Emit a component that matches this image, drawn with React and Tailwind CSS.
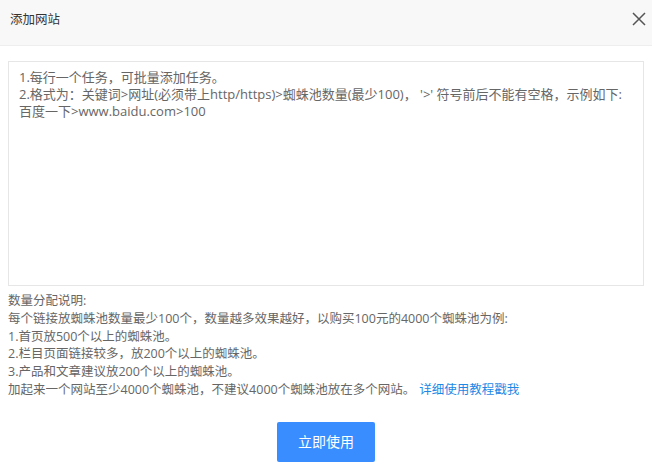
export default function App() {
  const font = { fontFamily: '"Open Sans", "Noto Sans CJK SC", sans-serif' };

  return (
    <div className="w-[652px] h-[468px] bg-white overflow-hidden" style={font}>
      <div className="flex items-start justify-between h-[46px] pl-[10px] pr-[6px] pt-[11px] bg-[#f8f8f8] border-b border-[#eeeeee]">
        <span className="text-[12.5px] leading-[17px] text-[#333]">添加网站</span>
        <svg width="14" height="14" viewBox="0 0 14 14" className="mt-[1px]">
          <path d="M1 1 L13 13 M13 1 L1 13" stroke="#555" strokeWidth="1.5" />
        </svg>
      </div>

      <div className="px-[8px] pt-[15px]">
        <div className="h-[225px] border border-[#e6e6e6] px-[10px] pt-[7px] text-[13px] leading-[17px] text-[#666]">
          <p>1.每行一个任务，可批量添加任务。</p>
          <p>2.格式为：关键词&gt;网址(必须带上http/https)&gt;蜘蛛池数量(最少100)， '&gt;' 符号前后不能有空格，示例如下:</p>
          <p>百度一下&gt;www.baidu.com&gt;100</p>
        </div>

        <div className="mt-[6px] text-[12.5px] leading-[17.8px] text-[#666]">
          <p>数量分配说明:</p>
          <p>每个链接放蜘蛛池数量最少100个，数量越多效果越好，以购买100元的4000个蜘蛛池为例:</p>
          <p>1.首页放500个以上的蜘蛛池。</p>
          <p>2.栏目页面链接较多，放200个以上的蜘蛛池。</p>
          <p>3.产品和文章建议放200个以上的蜘蛛池。</p>
          <p>
            加起来一个网站至少4000个蜘蛛池，不建议4000个蜘蛛池放在多个网站。
            <a className="ml-[4px] text-[#1e88e5]">详细使用教程戳我</a>
          </p>
        </div>

        <div className="flex justify-center mt-[23px]">
          <button className="w-[98px] h-[40px] rounded-[2px] bg-[#3a8dff] text-white text-[14px]">
            立即使用
          </button>
        </div>
      </div>
    </div>
  );
}
